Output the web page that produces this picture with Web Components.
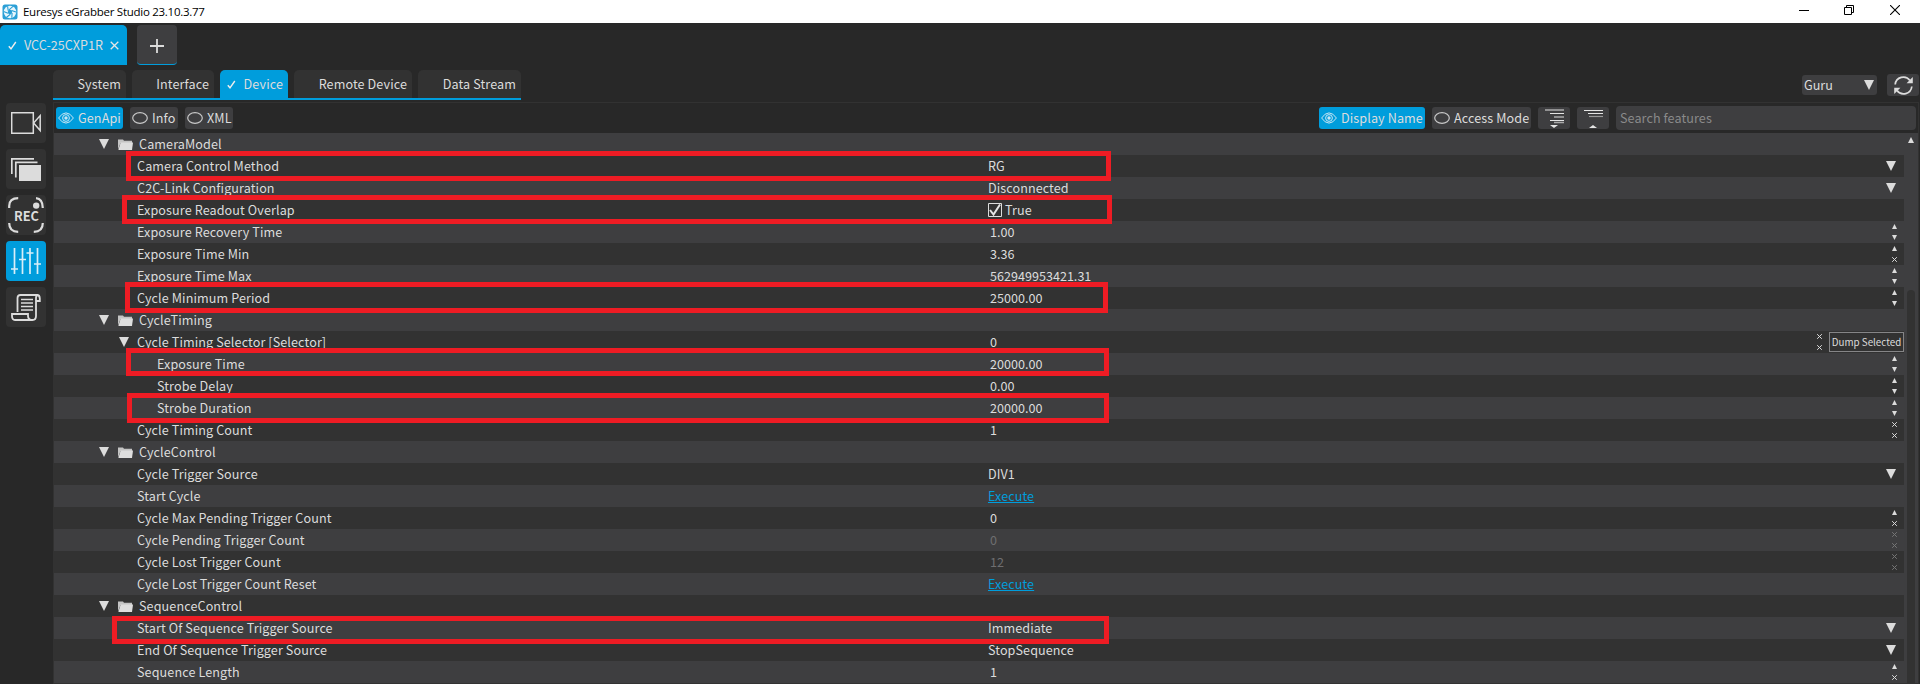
<!DOCTYPE html>
<html lang="en">
<head>
<meta charset="utf-8">
<title>Euresys eGrabber Studio</title>
<style>
html,body{margin:0;height:100%;overflow:hidden;background:#282828}
body{font:12.6px/22px "Noto Sans CJK SC","Noto Sans",sans-serif;color:#dcdcdc}
</style>
</head>
<body>
<eg-studio></eg-studio>
<script>
const define = (name, render) => customElements.define(name, class extends HTMLElement {
  connectedCallback() {
    if (this.shadowRoot) return;
    this.attachShadow({ mode: 'open' }).innerHTML = render(this);
  }
});

const ICONS = {
  app: [16, 16, '<rect x=".5" y=".5" width="15" height="15" rx="2.5" fill="#2a9fd6"/><circle cx="8" cy="8" r="6.2" fill="#e8f6fc"/><circle cx="8" cy="8" r="2.2" fill="#2a9fd6"/><g stroke="#2a9fd6" stroke-width="1.1" fill="none"><path d="M7 5.9 11 2.4M9.6 6.4 14 8M10.1 9 9.8 13.8M8.4 10.2 4.6 13.2M6 9.2 1.6 7.4M6.2 6.8 5.6 2.2"/></g>'],
  check: [9, 9, '<path d="M.8 5.2 3 7.8 7.8 1" fill="none" stroke="#eee" stroke-width="1.4"/>'],
  close: [9, 9, '<path d="M.7.7l7.6 7.6M8.3.7.7 8.3" stroke="#e6e6e6" stroke-width="1.3"/>'],
  plus: [14, 14, '<path d="M7 0v14M0 7h14" stroke="#dcdcdc" stroke-width="1.8"/>'],
  eye: [16, 12, '<g fill="none" stroke="#c8e6f4"><path d="M.6 6Q4 .9 8 .9T15.4 6Q12 11.1 8 11.1T.6 6Z"/><circle cx="8" cy="6" r="3.4"/></g><circle cx="8" cy="6" r="1.7" fill="#c8e6f4"/>'],
  oval: [16, 12, '<ellipse cx="8" cy="6" rx="7.3" ry="5.3" fill="none" stroke="#c8c8c8" stroke-width="1.2"/>'],
  tri: [10, 10, '<path d="M0 0h10L5 10Z" fill="#dcdcdc"/>'],
  up: [5, 5, '<path d="M0 5h5L2.5 0Z" fill="#dcdcdc"/>'],
  scrollup: [6, 6, '<path d="M0 6h6L3 0Z" fill="#dcdcdc"/>'],
  down: [5, 5, '<path d="M0 0h5L2.5 5Z" fill="#dcdcdc"/>'],
  x: [5, 5, '<path d="M.2.2l4.6 4.6M4.8.2.2 4.8" stroke="currentColor"/>'],
  folder: [15, 11, '<path d="M0 10.5V.5h5l1 1.2h8V4H2.5Z" fill="#c4c4c4"/><path d="M2.6 3.4H15L14 11H.4Z" fill="#dedede"/>'],
  camera: [30, 22, '<g fill="none" stroke="#dcdcdc" stroke-width="1.5"><path d="M.7.7h21.6v20.6H.7Z"/><path d="M29.2 3.6v15L22.6 11Z"/></g>'],
  stack: [30, 23, '<path d="M8 7h22v16H8Z" fill="#dcdcdc"/><g fill="none" stroke="#dcdcdc" stroke-width="1.7"><path d="M.8 16V.8H23M4.8 19.5V4.4H26.5"/></g>'],
  rec: [36, 36, '<g fill="none" stroke="#dcdcdc" stroke-width="2.2"><path d="M1.2 11V9q0-7.8 9-7.8M28 1.2q6.8.8 6.8 9.8M1.2 26q0 8.8 9 8.8M34.8 26q0 8.8-9 8.8"/></g><circle cx="28.2" cy="8.6" r="3.2" fill="#dcdcdc"/><text x="18.5" y="23.5" text-anchor="middle" font-size="13" font-weight="700" font-family="Noto Sans CJK SC" textLength="25" lengthAdjust="spacingAndGlyphs" fill="#dcdcdc">REC</text>'],
  sliders: [30, 26, '<path d="M3.5 0v26M11.5 0v26M19 0v26M26.5 0v26M0 21h7M8 11.5h7M15.5 5h7M23 16h7" stroke="#d8eef8" stroke-width="1.7"/>'],
  scroll: [30, 27, '<g fill="none" stroke="#dcdcdc" stroke-width="1.8"><path d="M6.5 18V4Q6.5 1 9.5 1H26Q28.8 1 28.8 4.5V7H25M25 7V4Q25 1 27 1M25 7V22Q25 26 21.5 26H4Q1 26 1 22V20H17V22Q17 26 21.5 26"/></g><path d="M10 5.5h12M10 9h12M10 12.5h12M10 16h12" stroke="#dcdcdc" stroke-width="1.5"/>'],
  refresh: [19, 19, '<g fill="none" stroke="#dcdcdc" stroke-width="1.7"><path d="M1.2 8.5A8.2 8.2 0 0 1 16 4.5M17.8 10.5A8.2 8.2 0 0 1 3 14.5"/></g><path d="M18.8 1v6.2H12.6ZM.2 18v-6.2H6.4Z" fill="#dcdcdc"/>'],
  expand: [20, 19, '<path d="M1 1h19M6 4.5h14M6 11.5h14" stroke="#e4e4e4" stroke-width="1.2"/><path d="M10 8h10M10 13.5h10" stroke="#aaa" stroke-width="1.3"/><path d="M6 16h8l-4 3Z" fill="#e4e4e4"/>'],
  collapse: [20, 19, '<path d="M1 1.5h19M5 4.5h15" stroke="#e4e4e4"/><path d="M6 7.5h14" stroke="#999" stroke-width="1.2"/><path d="M6 19h8l-4-3Z" fill="#e4e4e4"/>'],
  min: [10, 10, '<path d="M0 5.5h10" stroke="#000"/>'],
  restore: [10, 10, '<path d="M.5 2.5h7v7h-7ZM2.5 2.5v-2h7v7h-2" fill="none" stroke="#000"/>'],
  exit: [10, 10, '<path d="M0 0l10 10M10 0 0 10" stroke="#000" stroke-width="1.1"/>'],
  box: [14, 14, '<path d="M.5.5h13v13H.5Z" fill="none" stroke="#dcdcdc"/><path d="M2 7 5.5 11.5 12 1.5" fill="none" stroke="#e4e4e4" stroke-width="2"/>']
};
define('eg-icon', el => {
  const [w, h, body] = ICONS[el.getAttribute('name')];
  return `<style>:host{display:block;flex:none;width:${w}px;height:${h}px}svg{display:block;letter-spacing:0}</style><svg width="${w}" height="${h}" viewBox="0 0 ${w} ${h}">${body}</svg>`;
});

define('eg-titlebar', () => `<style>
:host{display:flex;align-items:center;height:23px;background:#fff;color:#000;font:11.5px/23px "Open Sans","Noto Sans",sans-serif;padding-left:2px;box-sizing:border-box}
.t{margin-left:5px;flex:1;letter-spacing:-.27px}.w{display:flex;gap:35px;margin-right:20px;position:relative;top:-1.5px}
.w :last-child{margin-left:1px}
</style><eg-icon name="app"></eg-icon><span class="t"><slot></slot></span><div class="w"><eg-icon name="min"></eg-icon><eg-icon name="restore"></eg-icon><eg-icon name="exit"></eg-icon></div>`);

define('eg-tab', el => {
  const on = el.hasAttribute('active');
  return `<style>:host{display:flex;align-items:center;box-sizing:border-box;height:28px;border-radius:5px 5px 0 0;padding:0 5px 0 8px;justify-content:flex-end;white-space:nowrap;letter-spacing:.1px;background:${on ? '#009ddc' : '#323232'}}eg-icon{margin-right:8px}</style>${on ? '<eg-icon name="check"></eg-icon>' : ''}<slot></slot>`;
});

define('eg-toggle', el => {
  const on = el.hasAttribute('active');
  return `<style>:host{display:flex;align-items:center;height:22px;border-radius:3px;padding-left:2px;box-sizing:border-box;gap:4px;white-space:nowrap;letter-spacing:.1px;background:${on ? '#009ddc' : '#3e3e40'}}</style><eg-icon name="${on ? 'eye' : 'oval'}"></eg-icon><span><slot></slot></span>`;
});

define('eg-tool', el => `<style>:host{display:flex;align-items:center;justify-content:center;box-sizing:border-box;width:40px;height:40px;border-radius:4px;background:${el.hasAttribute('active') ? '#009ddc' : '#323232'}}</style><eg-icon name="${el.getAttribute('icon')}"></eg-icon>`);

define('eg-feature', el => {
  const a = n => el.getAttribute(n) || '';
  const kind = a('kind'), pad = +a('indent'), ctl = a('ctl');
  const folder = kind === 'folder';
  const numeric = /^[0-9]/.test(a('value'));
  const name = (folder || kind === 'group' ? '<eg-icon class="t" name="tri"></eg-icon>' : '') + (folder ? '<eg-icon class="f" name="folder"></eg-icon>' : '') + '<span><slot></slot></span>';
  const val = kind === 'bool' ? '<eg-icon class="b" name="box"></eg-icon>' + a('value') : kind === 'link' ? `<a>${a('value')}</a>` : a('value');
  const spin = { ud: ['up', 'down'], ux: ['up', 'x'], xx: ['x', 'x'] }[ctl];
  const spinner = spin ? `<div class="s">${spin.map(n => `<eg-icon name="${n}"></eg-icon>`).join('')}</div>` : '';
  return `<style>
:host{display:grid;grid-template-columns:934px 1fr auto;height:22px;line-height:22px;color:#dcdcdc}
.n,.v,.c{display:flex;align-items:center;white-space:nowrap}
.n{padding-left:${pad}px;letter-spacing:.1px}
.v{padding-left:${numeric ? 2 : 0}px;letter-spacing:${numeric ? 0 : .08}px;color:${a('dim') ? '#6e6e70' : 'inherit'}}
.t{margin-right:${folder ? 9 : 8}px}.f{margin-right:6px}.b{margin-right:3px}
a{color:#009ddc;text-decoration:underline;text-underline-offset:1px}
.s{display:flex;flex-direction:column;gap:6px;color:${a('dim') ? '#777' : '#dcdcdc'};padding-right:7px}
.d{margin-right:8px}
button{font:9.8px/18px "Noto Sans CJK SC",sans-serif;height:20px;width:75px;padding:0;margin:0;border:1px solid #858587;background:#323232;color:#dcdcdc;white-space:nowrap}
</style><div class="n">${name}</div><div class="v">${val}</div><div class="c">${ctl === 'menu' ? '<eg-icon class="d" name="tri"></eg-icon>' : spinner}${kind === 'group' ? '<button>Dump Selected</button>' : ''}</div>`;
});

define('eg-mark', el => {
  const [x, y, r, b] = el.getAttribute('box').split(' ').map(Number);
  return `<style>:host{position:absolute;box-sizing:border-box;left:${x}px;top:${y}px;width:${r - x}px;height:${b - y}px;border:5px solid #ee1c24}</style>`;
});

const rows = [
  ['CameraModel', 45, 'folder'],
  ['Camera Control Method', 83, '', 'RG', 'menu'],
  ['C2C-Link Configuration', 83, '', 'Disconnected', 'menu'],
  ['Exposure Readout Overlap', 83, 'bool', 'True'],
  ['Exposure Recovery Time', 83, '', '1.00', 'ud'],
  ['Exposure Time Min', 83, '', '3.36', 'ux'],
  ['Exposure Time Max', 83, '', '562949953421.31', 'ud'],
  ['Cycle Minimum Period', 83, '', '25000.00', 'ud'],
  ['CycleTiming', 45, 'folder'],
  ['Cycle Timing Selector [Selector]', 65, 'group', '0', 'xx'],
  ['Exposure Time', 103, '', '20000.00', 'ud'],
  ['Strobe Delay', 103, '', '0.00', 'ud'],
  ['Strobe Duration', 103, '', '20000.00', 'ud'],
  ['Cycle Timing Count', 83, '', '1', 'xx'],
  ['CycleControl', 45, 'folder'],
  ['Cycle Trigger Source', 83, '', 'DIV1', 'menu'],
  ['Start Cycle', 83, 'link', 'Execute'],
  ['Cycle Max Pending Trigger Count', 83, '', '0', 'ux'],
  ['Cycle Pending Trigger Count', 83, '', '0', 'xx', 1],
  ['Cycle Lost Trigger Count', 83, '', '12', 'xx', 1],
  ['Cycle Lost Trigger Count Reset', 83, 'link', 'Execute'],
  ['SequenceControl', 45, 'folder'],
  ['Start Of Sequence Trigger Source', 83, '', 'Immediate', 'menu'],
  ['End Of Sequence Trigger Source', 83, '', 'StopSequence', 'menu'],
  ['Sequence Length', 83, '', '1', 'ux']
];

define('eg-tree', () => `<style>
:host{display:grid;grid-template-columns:1850px 11px;height:550px;background:#3e3e40}
eg-feature:nth-child(even){background:#323232}
.bar{display:flex;flex-direction:column;padding-left:3px}
.bar eg-icon{margin:4px 0 0 1px}
.thumb{margin-top:147px;flex:1;width:8px;border-radius:4px 4px 0 0;background:#323232}
</style><div>${rows.map(([n, i, k = '', v = '', c = '', d = '']) => `<eg-feature indent="${i}" kind="${k}" value="${v}" ctl="${c}" dim="${d}">${n}</eg-feature>`).join('')}</div><div class="bar"><eg-icon name="scrollup"></eg-icon><div class="thumb"></div></div>`);

define('eg-studio', () => `<style>
:host{display:block;position:relative;width:1920px;height:684px;overflow:hidden;background:#282828}
.cams{display:flex;gap:10px;height:42px;padding-top:2px;box-sizing:border-box}
.cam{display:flex;align-items:center;box-sizing:border-box;width:127px;height:40px;background:#009ddc;border-radius:5px 5px 0 0;padding-left:8px}
.cam span{flex:1;margin-left:7px;white-space:nowrap}
.cam :last-child{margin-right:8px}
.add{display:flex;align-items:center;justify-content:center;width:40px;height:40px;padding-top:2px;box-sizing:border-box;border-radius:4px;background:#3e3e40;border-bottom:1px solid #009ddc}
.main{display:grid;grid-template-columns:53px 1fr;height:619px}
.side{display:flex;flex-direction:column;gap:6px;padding:38px 0 0 6px}
.head{display:flex;height:37px;padding-top:5px;box-sizing:border-box}
.tabs{display:flex;gap:6px;height:30px;box-sizing:border-box;border-bottom:2px solid #009ddc;width:468px}
.right{display:flex;margin-left:auto;gap:10px;padding:4px 1px 0 0}
.guru{display:flex;align-items:center;justify-content:space-between;box-sizing:border-box;width:75px;height:20px;margin-top:1px;padding:0 3px 0 2px;border-radius:3px;background:#3e3e40}
.btn{display:flex;align-items:center;justify-content:center;width:32px;height:22px;border-radius:3px;background:#3e3e40}
.panel{border:1px solid #323232;margin-right:1px;box-sizing:border-box;height:582px}
.bar{display:flex;gap:7px;height:30px;box-sizing:border-box;padding:4px 2px 0 2px}
.search{box-sizing:border-box;width:300px;height:24px;margin-top:-1px;border-radius:4px;background:#3e3e40;color:#8a8a8a;padding:1px 4px;letter-spacing:.08px}
</style>
<eg-titlebar>Euresys eGrabber Studio 23.10.3.77</eg-titlebar>
<div class="cams"><div class="cam"><eg-icon name="check"></eg-icon><span>VCC-25CXP1R</span><eg-icon name="close"></eg-icon></div><div class="add"><eg-icon name="plus"></eg-icon></div></div>
<div class="main">
<div class="side"><eg-tool icon="camera"></eg-tool><eg-tool icon="stack"></eg-tool><eg-tool icon="rec"></eg-tool><eg-tool icon="sliders" active></eg-tool><eg-tool icon="scroll"></eg-tool></div>
<div>
<div class="head"><div class="tabs"><eg-tab style="width:73px">System</eg-tab><eg-tab style="width:82px">Interface</eg-tab><eg-tab active style="width:68px">Device</eg-tab><eg-tab style="width:118px">Remote Device</eg-tab><eg-tab style="width:103px">Data Stream</eg-tab></div>
<div class="right"><div class="guru">Guru<eg-icon name="tri"></eg-icon></div><div class="btn"><eg-icon name="refresh"></eg-icon></div></div></div>
<div class="panel"><div class="bar"><eg-toggle active style="width:67px">GenApi</eg-toggle><eg-toggle style="width:48px">Info</eg-toggle><eg-toggle style="width:48px">XML</eg-toggle><eg-toggle active style="width:106px;margin-left:auto">Display Name</eg-toggle><eg-toggle style="width:99px">Access Mode</eg-toggle><div class="btn"><eg-icon name="expand"></eg-icon></div><div class="btn"><eg-icon name="collapse"></eg-icon></div><div class="search">Search features</div></div>
<eg-tree></eg-tree></div>
</div></div>
<eg-mark box="126 151 1111 181"></eg-mark><eg-mark box="122 195 1112 224"></eg-mark><eg-mark box="125 282 1108 313"></eg-mark><eg-mark box="126 348 1109 376"></eg-mark><eg-mark box="127 393 1109 423"></eg-mark><eg-mark box="112 616 1109 644"></eg-mark>`);
</script>
</body>
</html>
